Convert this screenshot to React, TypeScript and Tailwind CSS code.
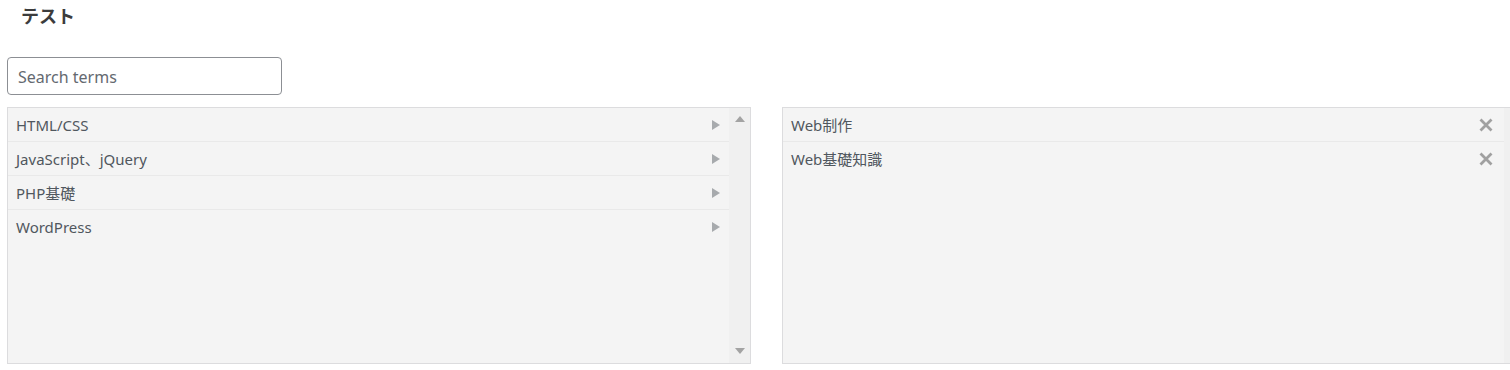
import React from 'react';

// ── Term selector (two-pane list) ──────────────

const LEFT_TERMS = ['HTML/CSS', 'JavaScript、jQuery', 'PHP基礎', 'WordPress'];
const SELECTED_TERMS = ['Web制作', 'Web基礎知識'];

const FONT = "font-['Noto_Sans','Noto_Sans_CJK_JP',sans-serif]";

const ArrowRight = () => (
  <svg width="8" height="10" viewBox="0 0 8 10">
    <path d="M0 0L8 5L0 10Z" fill="#a7aaad" />
  </svg>
);

const ArrowUp = () => (
  <svg width="10" height="6" viewBox="0 0 10 6">
    <path d="M0 6L5 0L10 6Z" fill="#a3a3a3" />
  </svg>
);

const ArrowDown = () => (
  <svg width="10" height="6" viewBox="0 0 10 6">
    <path d="M0 0L10 0L5 6Z" fill="#a3a3a3" />
  </svg>
);

const IconX = () => (
  <svg width="14" height="14" viewBox="0 0 14 14">
    <path d="M1.5 1.5L12.5 12.5M12.5 1.5L1.5 12.5" stroke="#a0a0a0" strokeWidth="2.8" />
  </svg>
);

const Row: React.FC<{ label: string; right: React.ReactNode; pr: string }> = ({ label, right, pr }) => (
  <div className={`flex h-[34px] items-center justify-between border-b border-[#e9e9e9] last:border-b-0 pl-[8px] ${pr}`}>
    <span className="text-[15px] leading-[22px] text-[#50575e]">{label}</span>
    {right}
  </div>
);

export default function App() {
  return (
    <div className={`${FONT} w-[1510px] h-[370px] overflow-hidden bg-white`}>
      <h2 className="pl-[21px] pt-[4px] text-[18px] font-bold leading-[24px] text-[#3c3c3c]">テスト</h2>

      <div className="pl-[7px] pt-[29px]">
        <input
          type="text"
          placeholder="Search terms"
          className="h-[38px] w-[275px] rounded-[4px] border border-[#8c8f94] px-[10px] pt-[2px] text-[16px] text-[#50575e] placeholder:text-[#646970] outline-none"
        />
      </div>

      <div className="flex gap-[31px] pl-[7px] pt-[12px]">
        {/* available terms */}
        <div className="flex h-[257px] w-[744px] shrink-0 border border-[#dcdcde] bg-[#f4f4f4]">
          <div className="flex-1">
            {LEFT_TERMS.map((t) => (
              <Row key={t} label={t} right={<ArrowRight />} pr="pr-[9px]" />
            ))}
          </div>
          <div className="flex w-[21px] flex-col items-center justify-between bg-[#f0f0f0] pt-[8px] pb-[9px]">
            <ArrowUp />
            <ArrowDown />
          </div>
        </div>

        {/* selected terms */}
        <div className="flex h-[257px] w-[744px] shrink-0 border border-[#dcdcde] bg-[#f4f4f4]">
          <div className="flex-1">
            {SELECTED_TERMS.map((t) => (
              <Row key={t} label={t} right={<IconX />} pr="pr-[11px]" />
            ))}
          </div>
          <div className="w-[21px] bg-[#f0f0f0]" />
        </div>
      </div>
    </div>
  );
}
